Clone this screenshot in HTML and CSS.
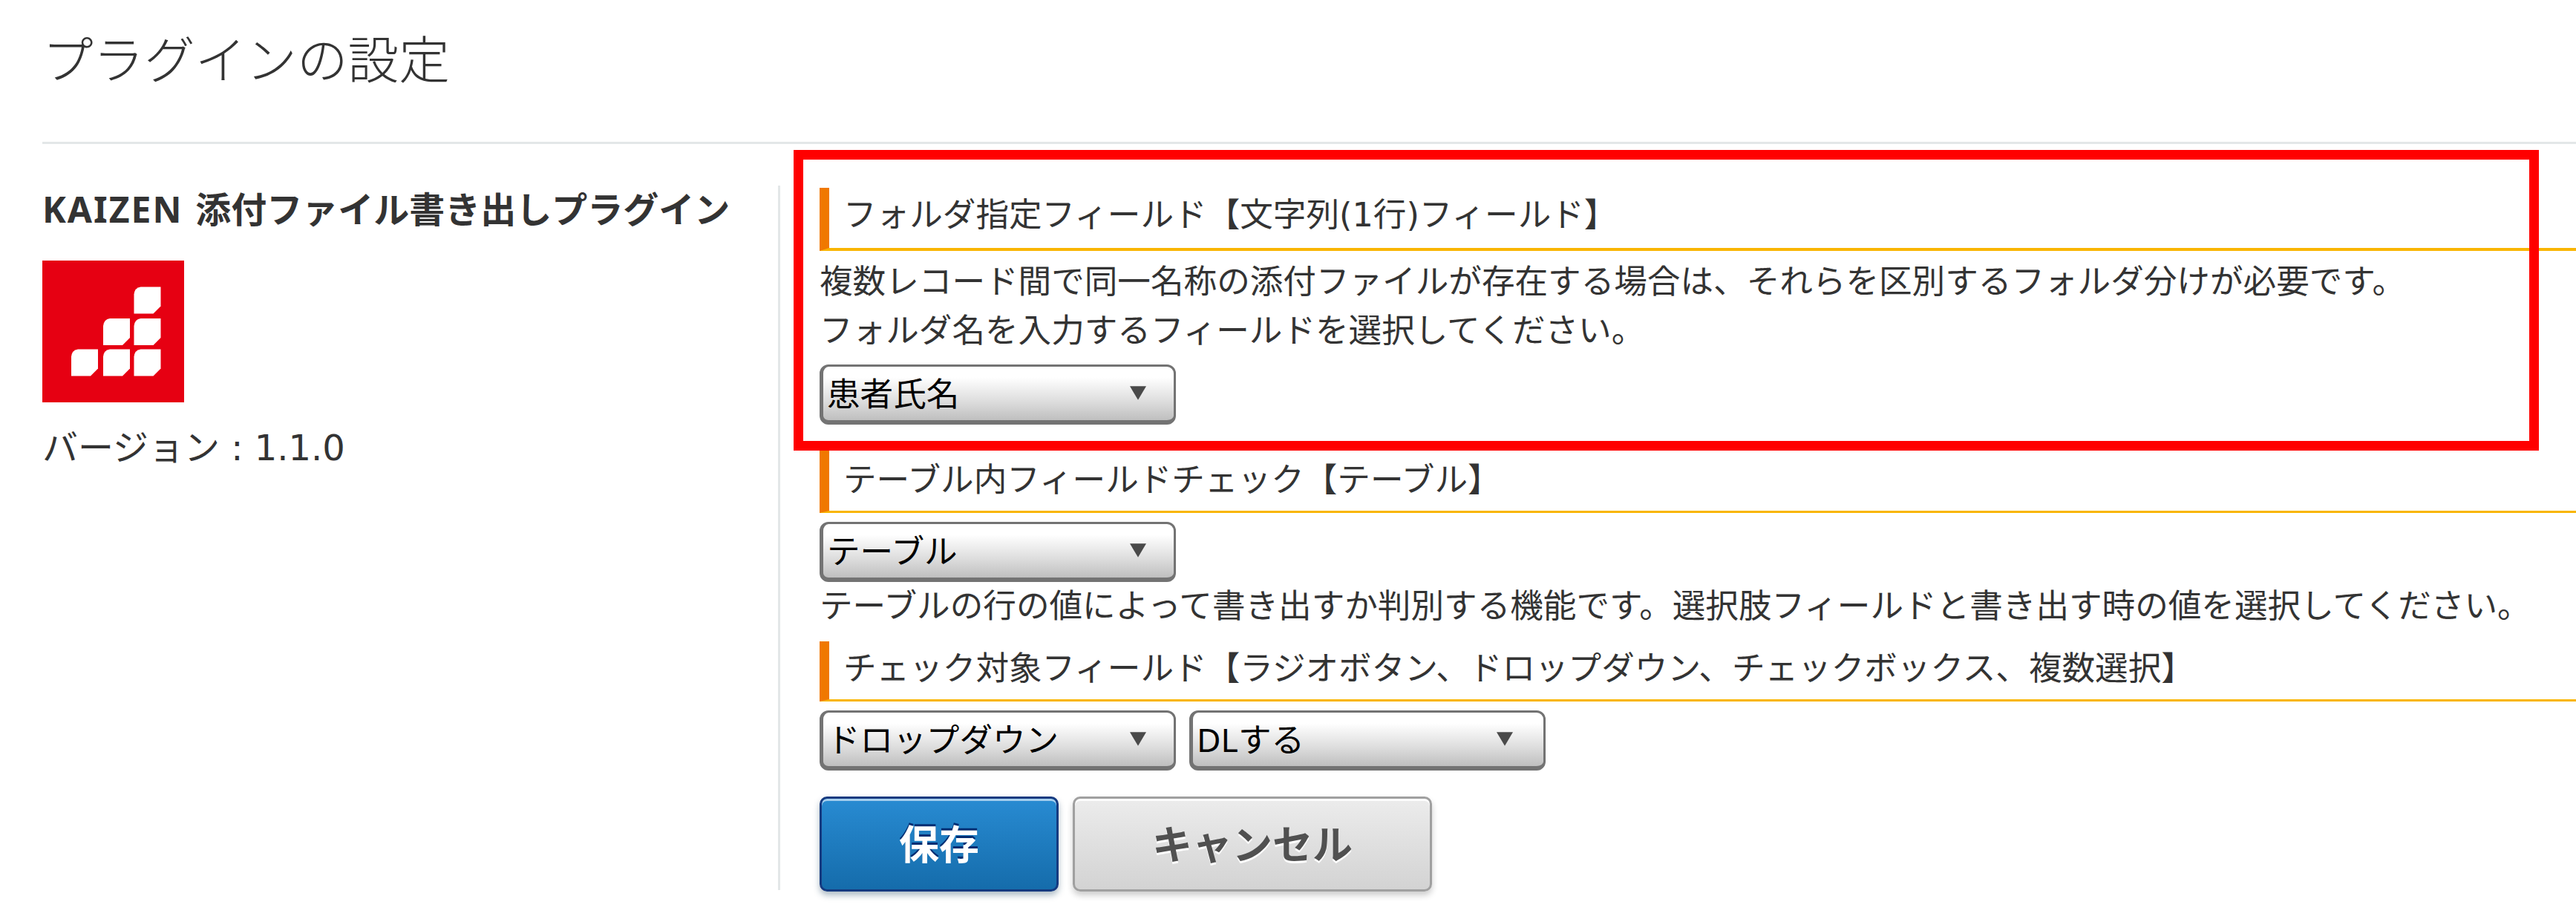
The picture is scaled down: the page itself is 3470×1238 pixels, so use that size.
FILE: index.html
```html
<!DOCTYPE html>
<html lang="ja">
  <head>
    <meta charset="UTF-8" />
    <title>プラグインの設定</title>
    <link rel="stylesheet" href="styles.css">
  </head>
  <body>
    <h1 class="page-title">プラグインの設定</h1>
    <div class="container">
      <div class="plugin-info">
        <h2 class="plugin-name"><span class="latin">KAIZEN</span> 添付ファイル書き出しプラグイン</h2>
        <svg class="plugin-icon" viewBox="0 0 191 191">
          <rect width="191" height="191" fill="#e60012" />
          <defs>
            <path id="tile" d="M9 0H36V26L26 36H0V10Q1 1 9 0Z" fill="#fff" />
          </defs>
          <use href="#tile" x="123.500" y="35.500" />
          <use href="#tile" x="82" y="78" />
          <use href="#tile" x="123.500" y="78" />
          <use href="#tile" x="39" y="119.500" />
          <use href="#tile" x="82" y="119.500" />
          <use href="#tile" x="123.500" y="119.500" />
        </svg>
        <p class="version">バージョン : 1.1.0</p>
      </div>
      <form class="settings">
        <div class="field field-folder">
          <h3 class="field-title">フォルダ指定フィールド【文字列(1行)フィールド】</h3>
          <p class="note">複数レコード間で同一名称の添付ファイルが存在する場合は、それらを区別するフォルダ分けが必要です。<br>フォルダ名を入力するフィールドを選択してください。</p>
          <div class="row">
            <div class="select">
              <select><option>患者氏名</option></select>
              <svg class="arrow" viewBox="0 0 24 20"><path d="M0 0H24L12 20Z" /></svg>
            </div>
          </div>
        </div>
        <div class="field field-table">
          <h3 class="field-title">テーブル内フィールドチェック【テーブル】</h3>
          <div class="row">
            <div class="select">
              <select><option>テーブル</option></select>
              <svg class="arrow" viewBox="0 0 24 20"><path d="M0 0H24L12 20Z" /></svg>
            </div>
          </div>
          <p class="note">テーブルの行の値によって書き出すか判別する機能です。選択肢フィールドと書き出す時の値を選択してください。</p>
        </div>
        <div class="field field-check">
          <h3 class="field-title">チェック対象フィールド【ラジオボタン、ドロップダウン、チェックボックス、複数選択】</h3>
          <div class="row">
            <div class="select">
              <select><option>ドロップダウン</option></select>
              <svg class="arrow" viewBox="0 0 24 20"><path d="M0 0H24L12 20Z" /></svg>
            </div>
            <div class="select select-value">
              <select><option>DLする</option></select>
              <svg class="arrow" viewBox="0 0 24 20"><path d="M0 0H24L12 20Z" /></svg>
            </div>
          </div>
        </div>
        <div class="buttons">
          <button type="button" class="btn btn-save">保存</button>
          <button type="button" class="btn btn-cancel">キャンセル</button>
        </div>
      </form>
    </div>
    <div class="highlight"></div>
  </body>
</html>
```
FILE: styles.css
```css
* {
  box-sizing: border-box;
}
body {
  position: relative;
  height: 1238px;
  margin: 0;
  padding-left: 57px;
  overflow: hidden;
  background: #fff;
  color: #333;
  font-family: "DejaVu Sans", "Noto Sans CJK JP", sans-serif;
  font-size: 44.6px;
}
h1,
h2,
h3,
p {
  margin: 0;
}
.page-title {
  height: 194px;
  padding-top: 32px;
  border-bottom: 3px solid #e3e7e8;
  font-size: 68.6px;
  font-weight: 300;
  line-height: 100px;
}
.container {
  display: flex;
  padding-top: 56px;
}

/* 左側 */
.plugin-info {
  width: 994px;
  height: 949px;
  flex: none;
  border-right: 3px solid #e3e7e8;
}
.plugin-name {
  font-size: 48px;
  font-weight: bold;
  line-height: 64px;
  white-space: nowrap;
}
.latin {
  font-family: "Noto Sans", sans-serif;
  letter-spacing: 2px;
}
.plugin-icon {
  display: block;
  width: 191px;
  height: 191px;
  margin-top: 36px;
}
.version {
  margin-top: 29px;
  font-size: 48px;
  line-height: 64px;
}

/* 右側 */
.settings {
  flex: 1;
  padding: 3px 0 0 53px;
}
.field-title {
  height: 85px;
  padding-left: 19px;
  border-left: 13px solid #f07800;
  border-bottom: 4px solid #f9b500;
  font-size: 44.6px;
  font-weight: normal;
  line-height: 75px;
  white-space: nowrap;
}
.note {
  line-height: 66px;
  white-space: nowrap;
}
.row {
  display: flex;
  gap: 18px;
}
.field-folder .note {
  padding: 9px 0 12px;
}
.field-table {
  margin-top: 31px;
}
.field-table .field-title {
  height: 88px;
  padding-top: 7px;
  border-bottom-width: 3px;
}
.field-table .row {
  padding-top: 12px;
}
.field-check {
  margin-top: 14px;
}
.field-check .field-title {
  height: 81px;
  border-bottom-width: 3px;
}
.field-check .row {
  padding-top: 12px;
}

.select {
  position: relative;
  width: 480px;
  height: 81px;
}
.select select {
  width: 100%;
  height: 100%;
  padding: 0 60px 2px 5px;
  appearance: none;
  border: 3px solid #737373;
  border-left-width: 5px;
  border-bottom-width: 6px;
  border-radius: 12px;
  background: linear-gradient(#fff 20%, #ddd 65%, #bfbfbf);
  color: #000;
  font-family: "Noto Sans", "Noto Sans CJK JP", sans-serif;
  font-size: 44.6px;
}
.arrow {
  position: absolute;
  top: 29px;
  right: 40px;
  width: 22px;
  height: 19px;
  fill: #4a4a4a;
}
.select-value .arrow {
  right: 44px;
}

.buttons {
  display: flex;
  gap: 19px;
  padding-top: 35px;
}
.btn {
  height: 128px;
  padding: 0 0 6px;
  border: 3px solid;
  border-radius: 10px;
  font-family: "Noto Sans CJK JP", sans-serif;
  font-size: 54px;
  font-weight: bold;
}
.btn-save {
  width: 322px;
  border-color: #153a80;
  background: linear-gradient(#288bd2, #156cab);
  box-shadow: inset 0 3px 0 #a5cfee, 0 5px 8px rgba(20, 60, 90, 0.35);
  color: #fff;
  text-shadow: 0 -3px 0 #002d72;
}
.btn-cancel {
  width: 484px;
  border-color: #a0a0a0;
  background: linear-gradient(#ececec, #d3d3d3);
  box-shadow: inset 0 3px 0 #fff, 0 5px 8px rgba(0, 0, 0, 0.2);
  color: #505050;
  text-shadow: 0 3px 0 #fff;
}

/* 赤枠 */
.highlight {
  position: absolute;
  top: 202px;
  left: 1069px;
  width: 2351px;
  height: 405px;
  border: 13px solid #f00;
}
```
